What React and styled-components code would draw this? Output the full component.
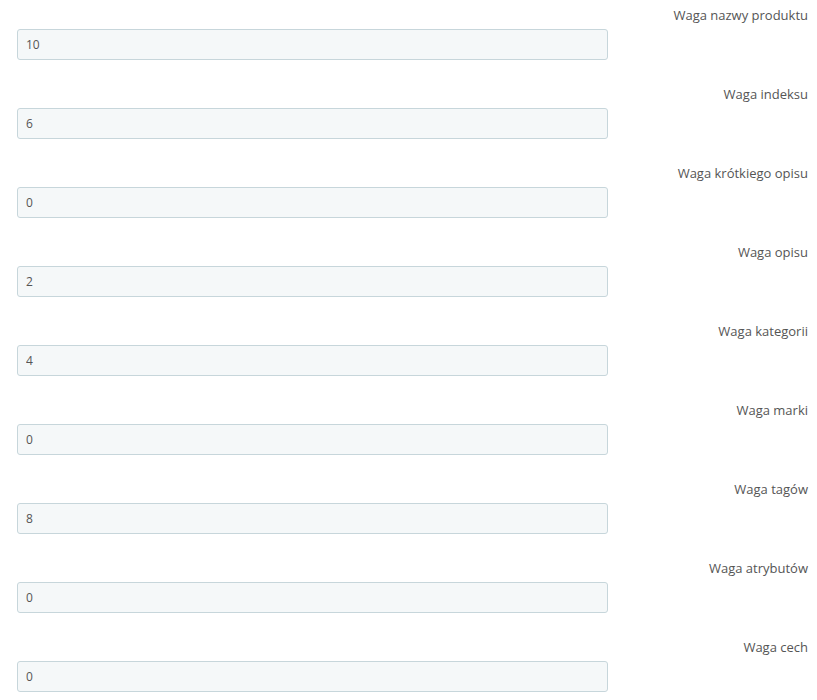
import React from "react";
import styled, { createGlobalStyle } from "styled-components";

const Global = createGlobalStyle`
  html, body { margin: 0; padding: 0; background: #fff; }
  body { font-family: "Open Sans", "Liberation Sans", sans-serif; }
`;

const Form = styled.div`
  display: flex;
  flex-direction: column;
  gap: 25px;
  padding: 6px 9px 0 17px;
  width: 817px;
  box-sizing: border-box;
`;

const Group = styled.div`
  display: flex;
  flex-direction: column;
  gap: 4px;
`;

const Label = styled.label`
  display: block;
  text-align: right;
  font-size: 13px;
  line-height: 19px;
  color: #555;
`;

const Input = styled.input`
  box-sizing: border-box;
  width: 591px;
  height: 31px;
  padding: 0 8px;
  border: 1px solid #c7d6db;
  border-radius: 3px;
  background: #f5f8f9;
  font-family: "Open Sans", "Liberation Sans", sans-serif;
  font-size: 12px;
  color: #555;
  outline: none;
`;

const fields = [
  ["Waga nazwy produktu", "10"],
  ["Waga indeksu", "6"],
  ["Waga krótkiego opisu", "0"],
  ["Waga opisu", "2"],
  ["Waga kategorii", "4"],
  ["Waga marki", "0"],
  ["Waga tagów", "8"],
  ["Waga atrybutów", "0"],
  ["Waga cech", "0"],
];

export default function App() {
  return (
    <>
      <Global />
      <Form>
        {fields.map(([label, value]) => (
          <Group key={label}>
            <Label>{label}</Label>
            <Input type="text" defaultValue={value} />
          </Group>
        ))}
      </Form>
    </>
  );
}
